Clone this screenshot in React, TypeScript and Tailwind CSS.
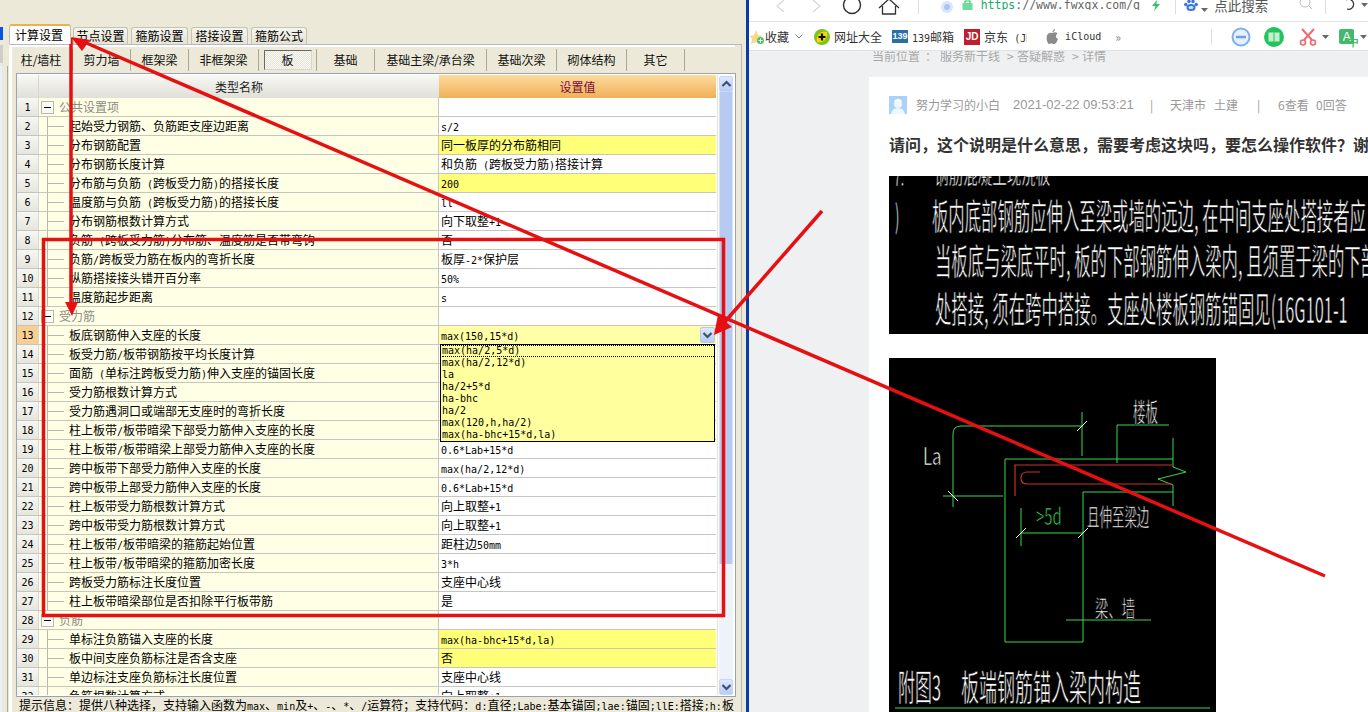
import React from "react";

type Row = { name: string; value?: string; group?: boolean; yellow?: boolean; active?: boolean };

const rows: Row[] = [
  { name: "公共设置项", group: true },
  { name: "起始受力钢筋、负筋距支座边距离", value: "s/2" },
  { name: "分布钢筋配置", value: "同一板厚的分布筋相同", yellow: true },
  { name: "分布钢筋长度计算", value: "和负筋 (跨板受力筋)搭接计算" },
  { name: "分布筋与负筋 (跨板受力筋)的搭接长度", value: "200", yellow: true },
  { name: "温度筋与负筋 (跨板受力筋)的搭接长度", value: "ll" },
  { name: "分布钢筋根数计算方式", value: "向下取整+1" },
  { name: "负筋 (跨板受力筋)分布筋、温度筋是否带弯钩", value: "否" },
  { name: "负筋/跨板受力筋在板内的弯折长度", value: "板厚-2*保护层" },
  { name: "纵筋搭接接头错开百分率", value: "50%" },
  { name: "温度筋起步距离", value: "s" },
  { name: "受力筋", group: true },
  { name: "板底钢筋伸入支座的长度", value: "max(150,15*d)", active: true },
  { name: "板受力筋/板带钢筋按平均长度计算" },
  { name: "面筋 (单标注跨板受力筋)伸入支座的锚固长度" },
  { name: "受力筋根数计算方式" },
  { name: "受力筋遇洞口或端部无支座时的弯折长度" },
  { name: "柱上板带/板带暗梁下部受力筋伸入支座的长度" },
  { name: "柱上板带/板带暗梁上部受力筋伸入支座的长度", value: "0.6*Lab+15*d" },
  { name: "跨中板带下部受力筋伸入支座的长度", value: "max(ha/2,12*d)" },
  { name: "跨中板带上部受力筋伸入支座的长度", value: "0.6*Lab+15*d" },
  { name: "柱上板带受力筋根数计算方式", value: "向上取整+1" },
  { name: "跨中板带受力筋根数计算方式", value: "向上取整+1" },
  { name: "柱上板带/板带暗梁的箍筋起始位置", value: "距柱边50mm" },
  { name: "柱上板带/板带暗梁的箍筋加密长度", value: "3*h" },
  { name: "跨板受力筋标注长度位置", value: "支座中心线" },
  { name: "柱上板带暗梁部位是否扣除平行板带筋", value: "是" },
  { name: "负筋", group: true },
  { name: "单标注负筋锚入支座的长度", value: "max(ha-bhc+15*d,la)", yellow: true },
  { name: "板中间支座负筋标注是否含支座", value: "否", yellow: true },
  { name: "单边标注支座负筋标注长度位置", value: "支座中心线" },
  { name: "负筋根数计算方式", value: "向上取整+1" },
];

const topTabs = [
  { label: "节点设置", w: "w-[55px]" },
  { label: "箍筋设置", w: "w-[57px]" },
  { label: "搭接设置", w: "w-[57px]" },
  { label: "箍筋公式", w: "w-[56px]" },
];

const subTabs = [
  { label: "柱/墙柱", w: "w-[59px] pr-[4px]" },
  { label: "剪力墙", w: "w-[58px]" },
  { label: "框架梁", w: "w-[58px]" },
  { label: "非框架梁", w: "w-[70px]" },
  { label: "板", w: "w-[58px]", on: true },
  { label: "基础", w: "w-[58px]" },
  { label: "基础主梁/承台梁", w: "w-[112px]" },
  { label: "基础次梁", w: "w-[70px]" },
  { label: "砌体结构", w: "w-[70px]" },
  { label: "其它", w: "w-[58px]" },
];

const dropItems = [
  "max(ha/2,5*d)",
  "max(ha/2,12*d)",
  "la",
  "ha/2+5*d",
  "ha-bhc",
  "ha/2",
  "max(120,h,ha/2)",
  "max(ha-bhc+15*d,la)",
];

// latin runs are half width in the old bitmap font, so they get a smaller mono size
const Mixed = ({ text }: { text: string }) => (
  <>
    {text.split(/([\x00-\x7f]+)/).map((part, i) =>
      /^[\x00-\x7f]+$/.test(part) ? (
        <span key={i} className="font-['DejaVu_Sans_Mono',monospace] text-[10px] whitespace-pre">
          {part}
        </span>
      ) : (
        <span key={i}>{part}</span>
      )
    )}
  </>
);

const Chevron = ({ up }: { up?: boolean }) => (
  <svg width="11" height="8" viewBox="0 0 11 8">
    <path d={up ? "M1.5 6 5.5 2 9.5 6" : "M1.5 2 5.5 6 9.5 2"} fill="none" stroke="#3b4f78" strokeWidth="2.2" />
  </svg>
);

const GridRow = ({ row, index }: { row: Row; index: number }) => (
  <div className="flex h-[19px] shrink-0 border-b border-[#c6c6be] text-[12px] text-black">
    <div
      className={`flex w-[22px] items-center justify-center border-r border-[#d8d8d0] ${
        row.active ? "bg-[#f8cf92]" : "bg-gradient-to-b from-[#f7f7f3] to-[#e6e5dd]"
      }`}
    >
      <span className="font-['DejaVu_Sans_Mono',monospace] text-[10px]">{index + 1}</span>
    </div>
    <div className="flex w-[400px] items-center border-r border-[#c6c6be] bg-[#ffffe6] whitespace-nowrap">
      {row.group ? (
        <>
          <div className="ml-[2px] flex h-[13px] w-[13px] items-center justify-center border border-[#b8b8b0] bg-[#fbfbf5]">
            <div className="h-px w-[7px] bg-black" />
          </div>
          <span className="ml-[5px] text-[#8c8c84]">{row.name}</span>
        </>
      ) : (
        <>
          <div className="ml-[8px] flex h-full w-[17px] items-center border-l border-[#b8b8b0]">
            <div className="h-px w-full bg-[#b8b8b0]" />
          </div>
          <span className="ml-[5px]">
            <Mixed text={row.name} />
          </span>
        </>
      )}
    </div>
    <div
      className={`flex flex-1 items-center justify-between pl-[2px] pr-px whitespace-nowrap ${
        row.yellow ? "bg-[#ffff78]" : row.active ? "bg-[#ffffa8]" : "bg-white"
      }`}
    >
      <span>{row.value ? <Mixed text={row.value} /> : null}</span>
      {row.active && (
        <div className="flex h-[16px] w-[15px] items-center justify-center rounded-[2px] border border-[#b5c8ee] bg-gradient-to-b from-[#dfe9fd] to-[#b7cbf3]">
          <Chevron />
        </div>
      )}
    </div>
  </div>
);

const Software = () => (
  <div className="flex h-full w-[746px] shrink-0 bg-[#ece9d8] font-['Noto_Sans_CJK_SC',sans-serif]">
    <div className="flex w-[9px] shrink-0 flex-col">
      <div className="mt-[27px] h-[13px] w-[3px] bg-[#0a54e0]" />
      <div className="mt-[5px] h-[18px] w-[3px] bg-[#cfcfc8]" />
      <div className="mt-[3px] flex flex-1">
        <div className="w-[2px] bg-[#e8eefc]" />
        <div className="ml-[5px] w-px bg-[#a8a89c]" />
      </div>
    </div>

    <div className="flex w-[733px] shrink-0 flex-col pt-[25px]">
      <div className="flex h-[19px] shrink-0 items-end text-[12px] text-black">
        <div className="relative z-10 flex h-[20px] w-[62px] items-center justify-center rounded-t-[3px] border-x border-[#c5c2b2] border-t-2 border-t-[#eeb04a] bg-white pr-[2px]">
          计算设置
        </div>
        <div className="ml-[2px] flex gap-[3px]">
          {topTabs.map((t) => (
            <div
              key={t.label}
              className={`flex h-[17px] ${t.w} items-center justify-center rounded-t-[3px] border-x border-t border-[#c5c2b2] bg-gradient-to-b from-[#f6f5ee] to-[#e6e3d4]`}
            >
              {t.label}
            </div>
          ))}
        </div>
      </div>

      <div className="flex min-h-0 flex-1 flex-col border-x border-t border-[#b4b9c2] border-l-white pl-[2px] pr-[6px] shadow-[inset_2px_0_0_#ffffff]">
        <div className="h-[2px] shrink-0 bg-white" />
        <div className="flex h-[26px] shrink-0 items-center pl-[2px] text-[12px] text-[#111]">
          {subTabs.map((t) => (
            <div key={t.label} className={`flex h-[22px] ${t.w} items-center justify-center border-r border-[#a9a79a]`}>
              {t.on ? (
                <div className="flex h-[20px] w-[48px] items-center justify-center border border-[#d8d6c8] border-l-[#6c6a60] border-t-[#6c6a60] bg-[repeating-conic-gradient(#e6e4d6_0_25%,#fbfaf4_0_50%)] bg-[length:2px_2px]">
                  {t.label}
                </div>
              ) : (
                t.label
              )}
            </div>
          ))}
        </div>
        <div className="ml-[4px] flex h-[624px] w-[720px] shrink-0 border border-[#9ca3ae] bg-white py-px">
          <div className="flex w-[699px] shrink-0 flex-col overflow-hidden">
            <div className="flex h-[23px] shrink-0 text-[12px]">
              <div className="w-[22px] border-r border-[#d8d8d0] bg-gradient-to-b from-[#f8f8f5] to-[#e0dfd8]" />
              <div className="flex w-[400px] items-center justify-center bg-gradient-to-b from-[#f8f8f5] to-[#e0dfd8] text-[#222]">
                类型名称
              </div>
              <div className="flex flex-1 items-center justify-center bg-gradient-to-b from-[#fbdb9c] to-[#efb055] text-[#7c0b3f]">
                设置值
              </div>
            </div>
            {rows.map((row, i) => (
              <GridRow key={i} row={row} index={i} />
            ))}
          </div>
          <div className="ml-px flex flex-1 flex-col border-l border-[#e4e4dc] pl-px pr-[2px] pt-px">
            <div className="flex h-[16px] shrink-0 items-center justify-center rounded-[2px] border border-[#c7d6f6] bg-gradient-to-b from-[#dfe8fd] to-[#b9ccf5]">
              <Chevron up />
            </div>
            <div className="h-[472px] shrink-0 border-x border-[#d5e0f8] bg-[#b6caf2]" />
            <div className="flex-1 bg-[#eef2fb]" />
            <div className="flex h-[16px] shrink-0 items-center justify-center rounded-[2px] border border-[#c7d6f6] bg-gradient-to-b from-[#dfe8fd] to-[#b9ccf5]">
              <Chevron />
            </div>
          </div>
        </div>
        <div className="ml-[7px] mt-[1px] whitespace-nowrap text-[12px] leading-[14px] text-black">
          <Mixed text="提示信息：提供八种选择，支持输入函数为max、min及+、-、*、/运算符；支持代码：d:直径;Labe:基本锚固;lae:锚固;llE:搭接;h:板" />
        </div>
      </div>
    </div>

    <div className="w-[4px] shrink-0" />
  </div>
);

const Dropdown = () => (
  <div className="absolute left-[440px] top-[344px] flex h-[98px] w-[275px] flex-col border border-black bg-[#ffff9e] pl-[1px] text-[10px] font-['DejaVu_Sans_Mono',monospace] leading-[12px] text-black">
    {dropItems.map((item, i) => (
      <div key={item} className={i === 0 ? "h-[12px] border-y border-dotted border-black leading-[10px]" : "h-[12px]"}>
        {item}
      </div>
    ))}
  </div>
);

const Caret = () => (
  <svg width="7" height="4" viewBox="0 0 7 4" className="shrink-0">
    <path d="M0 0h7L3.5 4z" fill="#666" />
  </svg>
);

const TopBar = () => (
  <div className="flex h-[22px] shrink-0 items-start overflow-hidden border-b border-[#e2e2e2] bg-white text-[13px] text-[#666]">
    <svg width="14" height="12" viewBox="0 0 14 12" className="ml-[25px] shrink-0">
      <path d="M10 0 3 6 10 12" fill="none" stroke="#d8d8d8" strokeWidth="1.3" />
    </svg>
    <svg width="14" height="12" viewBox="0 0 14 12" className="ml-[21px] shrink-0">
      <path d="M4 0 11 6 4 12" fill="none" stroke="#d8d8d8" strokeWidth="1.3" />
    </svg>
    <svg width="20" height="16" viewBox="0 0 20 16" className="ml-[19px] shrink-0">
      <circle cx="10" cy="5" r="8.5" fill="none" stroke="#333" strokeWidth="1.4" />
    </svg>
    <svg width="22" height="16" viewBox="0 0 22 16" className="ml-[16px] shrink-0">
      <path d="M1 8 11 -1 21 8M4.5 6V14H17.5V6" fill="none" stroke="#333" strokeWidth="1.3" />
    </svg>
    <div className="ml-[18px] h-[14px] w-px bg-[#ddd]" />
    <svg width="14" height="14" viewBox="0 0 14 14" className="ml-[21px] mt-px shrink-0">
      <circle cx="7" cy="6" r="6" fill="#dbe6fb" />
      <circle cx="7" cy="6" r="3" fill="#a9c4f5" />
    </svg>
    <svg width="11" height="12" viewBox="0 0 11 12" className="ml-[8px] shrink-0">
      <path d="M3 3V1H8V3" fill="none" stroke="#36c46f" strokeWidth="1.2" />
      <rect x="0.5" y="3" width="10" height="7" fill="#6fdc9c" />
    </svg>
    <div className="ml-[8px] w-[160px] shrink-0 overflow-hidden whitespace-nowrap font-['DejaVu_Sans_Mono',monospace] text-[11.5px] leading-[10px] text-[#666]">
      <span className="text-[#22a86a]">https</span>://www.fwxgx.com/q
    </div>
    <svg width="10" height="12" viewBox="0 0 10 12" className="ml-[10px] shrink-0">
      <path d="M6 0 1 6H4.5L3 11 9 4H5.5Z" fill="#2fc46a" />
    </svg>
    <div className="ml-[14px] h-[14px] w-px bg-[#ddd]" />
    <svg width="14" height="12" viewBox="0 0 14 12" className="ml-[9px] shrink-0">
      <ellipse cx="7" cy="7.500" rx="4.500" ry="3.500" fill="#3a72e0" />
      <circle cx="1.800" cy="4.500" r="1.700" fill="#3a72e0" />
      <circle cx="12.200" cy="4.500" r="1.700" fill="#3a72e0" />
      <circle cx="5" cy="1.500" r="1.700" fill="#3a72e0" />
      <circle cx="9" cy="1.500" r="1.700" fill="#3a72e0" />
      <ellipse cx="7" cy="7.500" rx="2.500" ry="1.500" fill="#dbe6fb" />
    </svg>
    <div className="ml-[3px] mt-[8px]">
      <Caret />
    </div>
    <span className="ml-[6px] -mt-[5px] whitespace-nowrap text-[13.5px] leading-[20px] text-[#555]">点此搜索</span>
    <svg width="14" height="12" viewBox="0 0 14 12" className="ml-[31px] shrink-0">
      <circle cx="6" cy="2" r="5" fill="none" stroke="#bbb" />
      <path d="M10 6 13 9" stroke="#bbb" />
    </svg>
    <div className="ml-[12px] h-[14px] w-px bg-[#ddd]" />
    <svg width="14" height="14" viewBox="0 0 14 14" className="ml-[17px] shrink-0">
      <path d="M3 0A5 5 0 1 1 4 9" fill="none" stroke="#333" strokeWidth="1.2" />
    </svg>
    <div className="ml-[4px] mt-[3px]">
      <Caret />
    </div>
  </div>
);

const BookmarkBar = () => (
  <div className="flex h-[29px] shrink-0 items-center border-b border-[#e2e2e2] bg-white pt-px text-[12px] text-[#333]">
    <svg width="15" height="16" viewBox="0 0 15 16" className="ml-[1px] shrink-0">
      <path d="M6 1 8 6 12 7 9 10 10 15 6 13 1 15 2 10 0 7 4 6Z" fill="#f5d98a" />
      <circle cx="10.5" cy="11.5" r="3.5" fill="#4cc06a" />
      <path d="M10.5 9.5v4M8.5 11.5h4" stroke="#fff" />
    </svg>
    <span>收藏</span>
    <svg width="8" height="5" viewBox="0 0 8 5" className="ml-[6px] shrink-0">
      <path d="M0.5 0.5 4 4 7.5 0.5" fill="none" stroke="#777" />
    </svg>
    <svg width="16" height="16" viewBox="0 0 16 16" className="ml-[11px] shrink-0">
      <circle cx="8" cy="8" r="8" fill="#7cc41e" />
      <path d="M3 13A8 8 0 0 1 13 3 8 8 0 0 1 3 13" fill="#f5d70e" />
      <path d="M8 4.5v7M4.5 8h7" stroke="#111" strokeWidth="2.2" />
    </svg>
    <span className="ml-[4px]">网址大全</span>
    <div className="ml-[10px] flex h-[13px] w-[16px] shrink-0 items-center justify-center bg-[#2b6ea8] font-['Liberation_Sans',sans-serif] text-[9px] font-bold text-white">
      139
    </div>
    <span className="ml-[4px]">
      <Mixed text="139邮箱" />
    </span>
    <div className="ml-[10px] flex h-[16px] w-[16px] shrink-0 items-center justify-center bg-[#bf1e2e] font-['Liberation_Sans',sans-serif] text-[10px] font-bold text-white">
      JD
    </div>
    <span className="ml-[4px] w-[43px] overflow-hidden whitespace-nowrap">
      京东<span className="font-['DejaVu_Sans_Mono',monospace] text-[10px]"> (JD.</span>
    </span>
    <svg width="13" height="16" viewBox="0 0 13 16" className="ml-[19px] shrink-0">
      <path d="M6.5 4C8 3 10 3 11.5 4.5 9.5 6 9.5 9 12 10 11 13 9.5 15 8 15 7 15 6.5 14.500 5.500 14.500 4 14.500 3.500 15 3 15 1 14 0 9 1 6.500 2 4 4.500 3.500 6.500 4ZM6.500 3C6.500 1.500 7.500 .5 9 0 9.200 1.500 8 3 6.500 3Z" fill="#8a8a8a" />
    </svg>
    <span className="ml-[6px] font-['DejaVu_Sans_Mono',monospace] text-[10px]">iCloud</span>
    <span className="ml-[14px] w-[7px] text-[#888]">»</span>
    <div className="ml-[89px] h-[16px] w-px bg-[#ddd]" />
    <svg width="20" height="20" viewBox="0 0 20 20" className="ml-[19px] shrink-0">
      <circle cx="10" cy="10" r="8.500" fill="#e8f0fd" stroke="#7fb0f0" strokeWidth="2" />
      <path d="M5 10h10" stroke="#6f9fe8" strokeWidth="2.500" />
    </svg>
    <svg width="20" height="20" viewBox="0 0 20 20" className="ml-[13px] shrink-0">
      <circle cx="10" cy="10" r="10" fill="#22c45e" />
      <path d="M4.500 5.500H15.500V14.500H4.500Z" fill="#c6efcf" />
      <path d="M10 5.500V14.500" stroke="#22c45e" />
    </svg>
    <svg width="18" height="18" viewBox="0 0 18 18" className="ml-[15px] shrink-0">
      <path d="M3 1 13 12M15 1 5 12" stroke="#f06a6a" strokeWidth="2" />
      <circle cx="4" cy="14.500" r="2.500" fill="none" stroke="#f06a6a" strokeWidth="1.600" />
      <circle cx="14" cy="14.500" r="2.500" fill="none" stroke="#f06a6a" strokeWidth="1.600" />
    </svg>
    <div className="ml-[5px]">
      <Caret />
    </div>
    <div className="relative ml-[10px] flex h-[15px] w-[15px] shrink-0 items-center justify-center rounded-[2px] bg-[#45b96b] font-['Liberation_Sans',sans-serif] text-[12px] text-white">
      A
      <span className="absolute -bottom-[4px] -right-[5px] text-[11px] font-bold leading-[11px] text-[#45b96b]">中</span>
    </div>
    <div className="ml-[6px]">
      <Caret />
    </div>
  </div>
);

const cadFont = "'Noto Sans CJK SC', sans-serif";

// white CAD lettering: tall narrow glyphs, thinned with a black stroke on top
const CadText = ({ x, y, size, sx, fill = "#fff", children }: { x: number; y: number; size: number; sx: number; fill?: string; children: string }) => (
  <text
    transform={`translate(${x} ${y}) scale(${sx} 1)`}
    fontFamily={cadFont}
    fontSize={size}
    fill={fill}
    stroke="#000"
    strokeWidth="0.7"
  >
    {children}
  </text>
);

const NoteImage = () => (
  <svg width="479" height="158" viewBox="0 0 479 158" className="block bg-black">
    <CadText x={5} y={10} size={24} sx={0.5}>7.</CadText>
    <CadText x={45} y={8} size={28} sx={0.52}>钢筋混凝土现浇板</CadText>
    <CadText x={6} y={52} size={32} sx={0.4}>)</CadText>
    <CadText x={43} y={54} size={36} sx={0.455}>板内底部钢筋应伸入至梁或墙的远边, 在中间支座处搭接者应</CadText>
    <CadText x={46} y={99} size={36} sx={0.455}>当板底与梁底平时, 板的下部钢筋伸入梁内, 且须置于梁的下部</CadText>
    <CadText x={46} y={147} size={36} sx={0.455}>处搭接, 须在跨中搭接。支座处楼板钢筋锚固见(16G101-1</CadText>
  </svg>
);

const DetailImage = () => (
  <svg width="327" height="354" viewBox="889 358 327 354" className="mt-[24px] block bg-black">
    <g fill="none" stroke="#38d850" strokeWidth="1">
      <path d="M953 507V434Q953 426 961 426H1083M1082 412V456" />
      <path d="M943 496H1003" />
      <path d="M1173 459H1005V642H1083V492H1173M1173 438V467L1186 472 1158 479 1173 485V506" />
      <path d="M1117 463V425H1169" />
      <path d="M1021 508V546M1021 533H1083" />
      <path d="M1066 620H1151" />
      <path d="M895 708H1210" />
    </g>
    <g fill="none" stroke="#fff" strokeWidth="1">
      <path d="M1077 431 1087 421M948 491 958 501M1016 538 1026 528M1078 538 1088 528" />
    </g>
    <g fill="none" stroke="#c8322a" strokeWidth="1.2">
      <path d="M1015 496V465H1172" />
      <path d="M1040 472H1027Q1021 472 1021 478 1021 484 1027 484H1172" />
    </g>
    <CadText x={923} y={465} size={24} sx={0.7}>La</CadText>
    <CadText x={1036} y={525} size={24} sx={0.62} fill="#38d850">&gt;5d</CadText>
    <CadText x={1087} y={526} size={24} sx={0.52}>且伸至梁边</CadText>
    <CadText x={1133} y={422} size={26} sx={0.48}>楼板</CadText>
    <CadText x={1095} y={617} size={23} sx={0.58}>梁、墙</CadText>
    <CadText x={898} y={701} size={36} sx={0.47}>附图3</CadText>
    <CadText x={961} y={701} size={36} sx={0.5}>板端钢筋锚入梁内构造</CadText>
  </svg>
);

const Browser = () => (
  <div className="flex min-w-0 flex-1 flex-col font-['Noto_Sans_CJK_SC',sans-serif]">
    <TopBar />
    <BookmarkBar />
    <div className="flex min-h-0 flex-1 flex-col overflow-hidden bg-[#eff0f2]">
      <div className="ml-[123px] flex h-[26px] shrink-0 whitespace-nowrap text-[12px] leading-[10px] text-[#a8a8a8]">
        <span>当前位置</span>
        <span className="ml-[5px]">：</span>
        <span className="ml-[3px]">服务新干线</span>
        <span className="ml-[7px] w-[10px]">&gt;</span>
        <span>答疑解惑</span>
        <span className="ml-[7px] w-[10px]">&gt;</span>
        <span>详情</span>
      </div>
      <div className="ml-[120px] flex-1 bg-white pl-[20px] pt-[19px]">
        <div className="flex h-[18px] items-center whitespace-nowrap text-[12px] text-[#999]">
          <svg width="18" height="18" viewBox="0 0 18 18" className="shrink-0">
            <rect width="18" height="18" fill="#a9d2f8" />
            <circle cx="9" cy="8" r="4" fill="#eef7ff" />
            <path d="M2 18Q3 12 9 12T16 18Z" fill="#eef7ff" />
            <path d="M4.500 5.500Q9 0 13.500 5.500Z" fill="#fff" />
          </svg>
          <span className="ml-[9px] w-[97px]">努力学习的小白</span>
          <span className="w-[137px] font-['Liberation_Sans',sans-serif] text-[13px]">2021-02-22 09:53:21</span>
          <span className="w-[20px]">|</span>
          <span className="w-[44px]">天津市</span>
          <span className="w-[43px]">土建</span>
          <span className="w-[21px]">|</span>
          <span className="w-[38px]">6查看</span>
          <span>0回答</span>
        </div>
        <div className="mt-[18px] h-[44px] whitespace-nowrap text-[16px] font-bold leading-[24px] text-[#333]">
          请问，这个说明是什么意思，需要考虑这块吗，要怎么操作软件？谢谢
        </div>
        <NoteImage />
        <DetailImage />
      </div>
    </div>
  </div>
);

// red markup drawn over the whole screenshot
const Annotations = () => (
  <svg width="1368" height="712" viewBox="0 0 1368 712" className="pointer-events-none absolute left-0 top-0">
    <g stroke="#e60f12" strokeWidth="3.5" fill="none">
      <rect x="43.500" y="239.500" width="680" height="376" />
      <path d="M1325 576 84 42" />
      <path d="M71 38V305" />
      <path d="M822 211 722 325" />
    </g>
    <g fill="#e60f12">
      <polygon points="71,37 90,40 82,51" />
      <polygon points="72,316 65,302 78,302" />
      <polygon points="714,335 718,315 732,327" />
    </g>
  </svg>
);

export default function App() {
  return (
    <div className="relative flex h-[712px] w-[1368px] overflow-hidden bg-white">
      <Software />
      <div className="w-[3px] shrink-0 bg-[#0a3aa4]" />
      <Browser />
      <Dropdown />
      <Annotations />
    </div>
  );
}
